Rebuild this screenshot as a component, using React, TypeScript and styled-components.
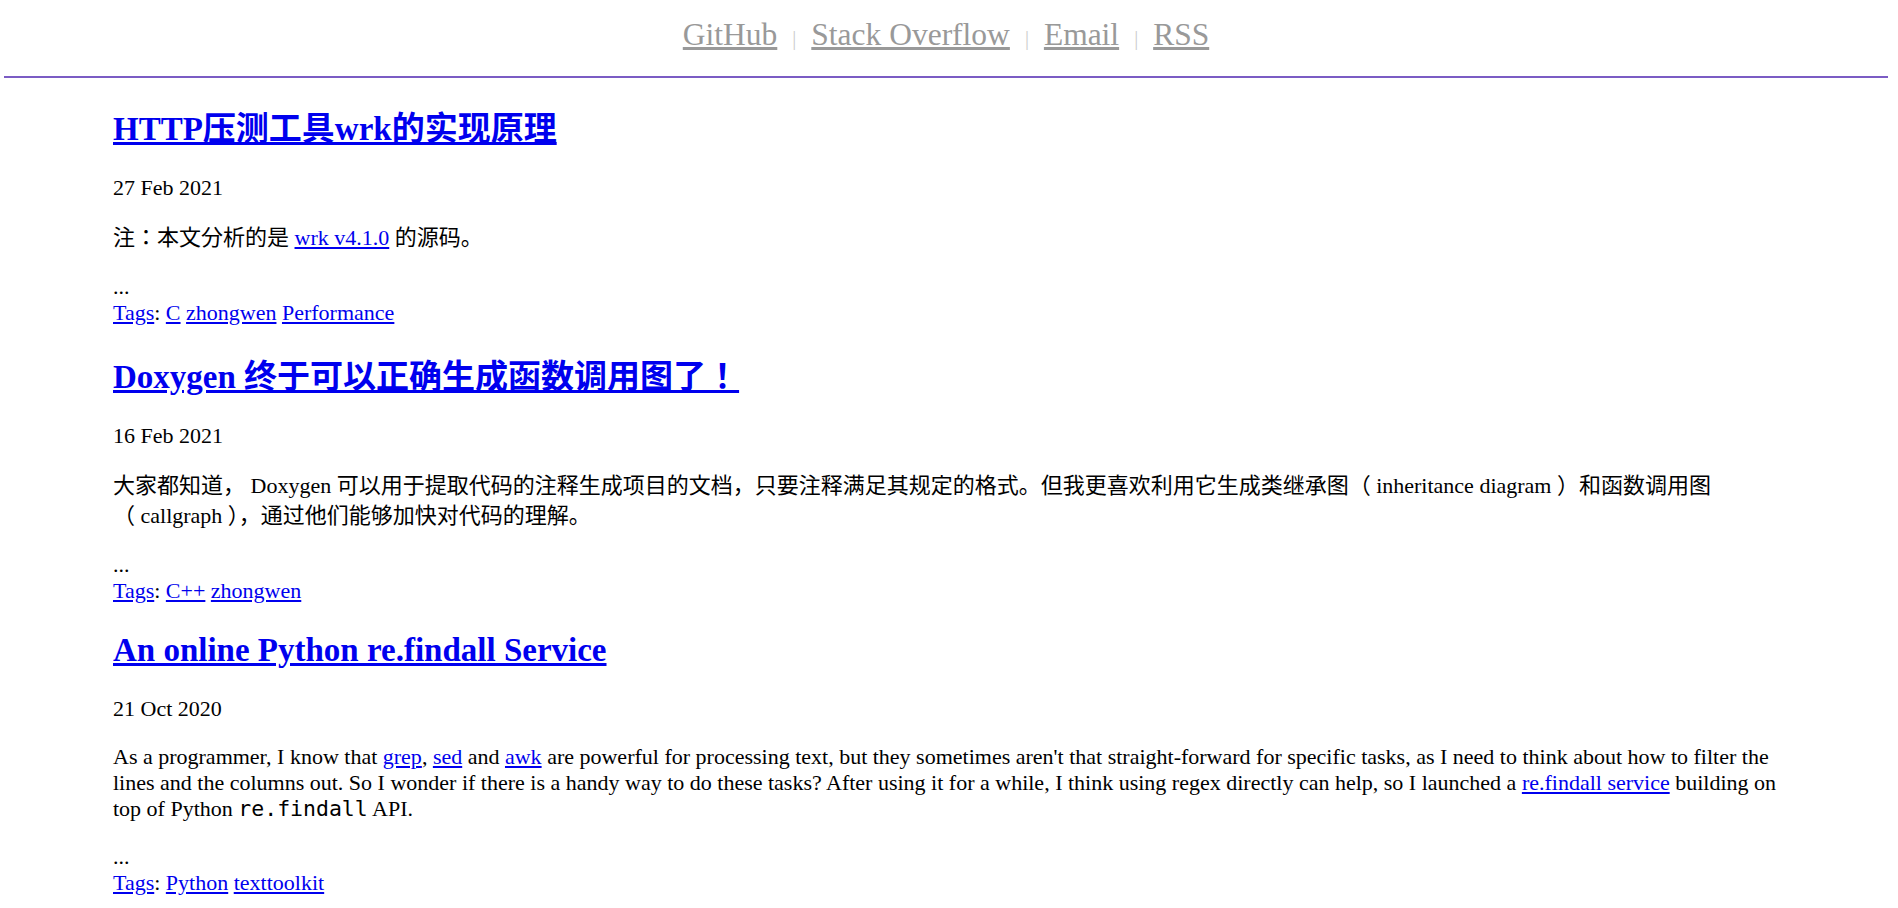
import styled, { createGlobalStyle } from 'styled-components';

const GlobalStyle = createGlobalStyle`
  html, body {
    margin: 0;
    padding: 0;
    background: #fff;
  }
  body {
    font-family: "Liberation Serif", "Noto Sans CJK JP", serif;
    font-size: 22px;
    color: #000;
  }
`;

const Page = styled.div`
  margin: 0 10px 0 4px;
`;

const Header = styled.header`
  text-align: center;
  padding-top: 17px;
`;

const NavLink = styled.a`
  font-size: 31.5px;
  color: #999;
  text-decoration: underline;
`;

const Sep = styled.span`
  font-size: 20px;
  color: #ccc;
  margin: 0 15px;
`;

const Rule = styled.hr`
  border: 0;
  border-top: 2px solid #7b5cc4;
  margin: 23px 0 0;
`;

const Main = styled.main`
  padding: 0 103px 0 109px;
`;

const Post = styled.article``;

const Title = styled.h2<{ $cjk?: boolean }>`
  font-size: 33px;
  font-weight: bold;
  line-height: 38px;
  margin: 27px 0;
  padding-top: ${(p) => (p.$cjk ? '5px' : '0')};
  a {
    color: #0000ee;
  }
`;

const DateLine = styled.p`
  margin: 22px 0;
`;

const Excerpt = styled.p<{ $cjk?: boolean }>`
  margin: 22px 0 ${(p) => (p.$cjk ? '20px' : '22px')};
  line-height: ${(p) => (p.$cjk ? '30.5px' : '26px')};
  a {
    color: #0000ee;
  }
`;

const NoBreak = styled.span`
  white-space: nowrap;
`;

const Code = styled.code`
  font-family: "DejaVu Sans Mono", monospace;
  font-size: 21.5px;
`;

const Meta = styled.div`
  a {
    color: #0000ee;
  }
`;

type PostData = {
  title: string;
  date: string;
  cjk: boolean;
  excerpt: React.ReactNode;
  tags: string[];
};

const posts: PostData[] = [
  {
    title: 'HTTP压测工具wrk的实现原理',
    date: '27 Feb 2021',
    cjk: true,
    excerpt: (
      <>
        注：本文分析的是 <a href="#">wrk v4.1.0</a> 的源码。
      </>
    ),
    tags: ['C', 'zhongwen', 'Performance'],
  },
  {
    title: 'Doxygen 终于可以正确生成函数调用图了！',
    date: '16 Feb 2021',
    cjk: true,
    excerpt: (
      <>
        大家都知道， Doxygen 可以用于提取代码的注释生成项目的文档，只要注释满足其规定的格式。但我更喜欢利用它生成类继承图（
        inheritance diagram ）和函数调用图<NoBreak>（ callgraph ），</NoBreak>通过他们能够加快对代码的理解。
      </>
    ),
    tags: ['C++', 'zhongwen'],
  },
  {
    title: 'An online Python re.findall Service',
    date: '21 Oct 2020',
    cjk: false,
    excerpt: (
      <>
        As a programmer, I know that <a href="#">grep</a>, <a href="#">sed</a> and{' '}
        <a href="#">awk</a> are powerful for processing text, but they sometimes aren't that
        straight-forward for specific tasks, as I need to think about how to filter the lines
        and the columns out. So I wonder if there is a handy way to do these tasks? After using
        it for a while, I think using regex directly can help, so I launched a{' '}
        <a href="#">re.findall service</a> building on top of Python <Code>re.findall</Code> API.
      </>
    ),
    tags: ['Python', 'texttoolkit'],
  },
];

const links = ['GitHub', 'Stack Overflow', 'Email', 'RSS'];

const App = () => {
  return (
    <Page>
      <GlobalStyle />
      <Header>
        {links.map((l, i) => (
          <span key={l}>
            {i > 0 && <Sep>|</Sep>}
            <NavLink href="#">{l}</NavLink>
          </span>
        ))}
      </Header>
      <Rule />
      <Main>
        {posts.map((p) => (
          <Post key={p.title}>
            <Title $cjk={p.cjk}>
              <a href="#">{p.title}</a>
            </Title>
            <DateLine>{p.date}</DateLine>
            <Excerpt $cjk={p.cjk}>{p.excerpt}</Excerpt>
            <Meta>
              ...
              <br />
              <a href="#">Tags</a>:{' '}
              {p.tags.map((t, i) => (
                <span key={t}>
                  {i > 0 && ' '}
                  <a href="#">{t}</a>
                </span>
              ))}
            </Meta>
          </Post>
        ))}
      </Main>
    </Page>
  );
};

export default App;
